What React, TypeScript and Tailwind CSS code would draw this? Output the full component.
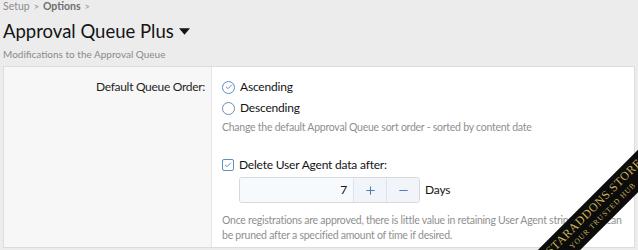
import { Check, Minus, Plus } from "lucide-react";

const font = { fontFamily: '"Segoe UI", Lato, "Noto Sans", sans-serif' };
const serif = { fontFamily: '"Liberation Serif", "DejaVu Serif", serif' };

export default function App() {
  return (
    <div className="relative h-[250px] w-[638px] overflow-hidden bg-[#ececec] text-[#141414]" style={font}>
      <div className="px-[3px]">
        <div className="flex h-[14px] items-center gap-[4px] text-[10.5px] text-[#8c8c8c]">
          <span>Setup</span>
          <span className="text-[9px]">&gt;</span>
          <span className="font-bold text-[#6f6f6f]">Options</span>
          <span className="text-[9px]">&gt;</span>
        </div>
        <h1 className="mt-[5px] flex h-[24px] items-center text-[18.5px] leading-[24px] text-[#141414]">
          Approval Queue Plus
          <svg viewBox="0 0 10 6" className="ml-[5px] mt-[1px] h-[7px] w-[11px]">
            <path d="M0 0h10L5 6z" fill="#141414" />
          </svg>
        </h1>
        <p className="mt-[4px] text-[10px] leading-[14px] text-[#8a8a8a]">Modifications to the Approval Queue</p>
      </div>

      <div className="mx-[3px] mt-[5px] flex h-[182px] border border-[#dcdcdc] bg-white">
        <div className="w-[208px] shrink-0 border-r border-[#e5e5e5] bg-[#f7f7f7] pr-[6px] pt-[10px] text-right text-[12px] leading-[20px] tracking-[-0.3px] text-[#1f1f1f]">
          Default Queue Order:
        </div>
        <div className="flex-1 pl-[10px] pt-[10px] pr-[4px] text-[12px] tracking-[-0.2px]">
          <label className="flex items-center gap-[5px] leading-[20px]">
            <span className="grid size-[13px] place-items-center rounded-full border border-[#5c8fc4]">
              <Check size={8} strokeWidth={3} className="text-[#5c8fc4]" />
            </span>
            Ascending
          </label>
          <label className="mt-[1px] flex items-center gap-[5px] leading-[20px]">
            <span className="size-[13px] rounded-full border border-[#6e8fb0]" />
            Descending
          </label>
          <p className="mt-[1px] text-[10.5px] leading-[16px] tracking-[-0.25px] text-[#8f8f8f]">
            Change the default Approval Queue sort order - sorted by content date
          </p>

          <label className="mt-[20px] flex items-center gap-[5px] leading-[20px]">
            <span className="grid size-[12px] place-items-center rounded-[2px] border border-[#5c8fc4]">
              <Check size={8} strokeWidth={3} className="text-[#5c8fc4]" />
            </span>
            Delete User Agent data after:
          </label>
          <div className="ml-[17px] mt-[2px] flex items-center">
            <div className="flex h-[26px] overflow-hidden rounded-[3px] border border-[#d8d8d8]">
              <div className="flex w-[113px] items-center justify-end bg-[#f7fafd] pr-[6px]">7</div>
              <div className="grid w-[33px] place-items-center border-l border-[#dde3ea] bg-[#f1f4f8] text-[#4f7fb4]">
                <Plus size={13} strokeWidth={2} />
              </div>
              <div className="grid w-[33px] place-items-center border-l border-[#dde3ea] bg-[#f1f4f8] text-[#4f7fb4]">
                <Minus size={13} strokeWidth={2} />
              </div>
            </div>
            <span className="ml-[5px]">Days</span>
          </div>
          <p className="mt-[10px] text-[10.5px] leading-[15px] tracking-[-0.25px] text-[#8f8f8f]">
            Once registrations are approved, there is little value in retaining User Agent strings. They can
            be pruned after a specified amount of time if desired.
          </p>
        </div>
      </div>

      <div
        className="absolute left-[498px] top-[196px] flex h-[30px] w-[200px] -rotate-45 flex-col items-center bg-[#0c0c0c] pt-[3px] leading-none text-[#c9b25a]"
        style={serif}
      >
        <span className="text-[12px] tracking-[0.6px]">STARADDONS.STORE</span>
        <span className="mt-[3px] text-[7.5px] tracking-[1px]">YOUR TRUSTED HUB</span>
      </div>
    </div>
  );
}
